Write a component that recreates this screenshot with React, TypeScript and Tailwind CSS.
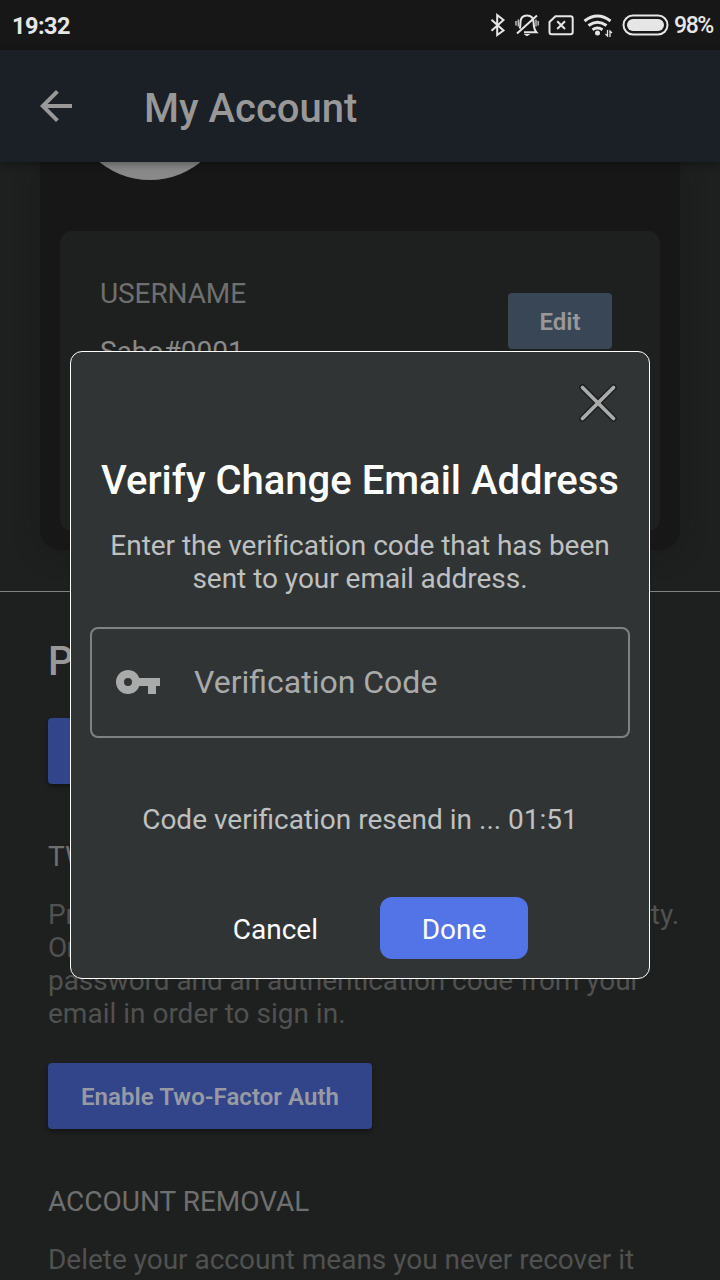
import React from "react";

function StatusIcons() {
  return (
    <svg width="184" height="50" viewBox="486 0 184 50" fill="none" stroke="#e6e6e6" strokeWidth="2">
      <path d="M491.500 19.800 L503.500 30.500 L497.200 35 V15 L503.500 20 L491.500 30.800" />
      <path d="M524 32.300 H536.500 C534 29.500 533.700 27 533.600 22.500 C533.500 17.500 531 15.400 527 15.400 C523 15.400 520.500 17.500 520.400 22.500 C520.400 25 520.300 27 519.800 28.500 M517 33.500 L537 15.500" strokeWidth="2" />
      <path d="M523.500 34 H530.500 L527 36.200 Z" fill="#e6e6e6" stroke="none" />
      <path d="M518.300 19.500 V26.500 M516 21 V25.500 M536 19.500 V26.500 M538.200 21 V25.500" strokeWidth="1.500" opacity="0.8" />
      <path d="M555.500 16.200 H570.500 Q572.700 16.200 572.700 18.400 V32 Q572.700 34.200 570.500 34.200 H551.500 Q549.500 34.200 549.500 32 V22 Z" />
      <path d="M557.200 21.200 L565 29 M565 21.200 L557.200 29" />
      <path d="M584.500 21 Q597.500 11 610.500 21" strokeWidth="3" />
      <path d="M588.500 25.500 Q597.500 19 606.500 25.500" strokeWidth="3" />
      <path d="M592.500 29.700 Q597.500 26.500 602.500 29.700" strokeWidth="3" />
      <circle cx="597.500" cy="33" r="2.500" fill="#e6e6e6" stroke="none" />
      <path d="M607.500 30 V36 L605.500 34 M610 37 V31 L612 33" strokeWidth="1.300" />
      <rect x="623.500" y="15.500" width="44" height="19" rx="9.500" />
      <rect x="627" y="19" width="37" height="12" rx="6" fill="#e6e6e6" stroke="none" />
    </svg>
  );
}

function StatusBar() {
  return (
    <div className="flex h-[50px] shrink-0 items-center bg-[#171717] text-[#e6e6e6]">
      <span className="ml-3 mt-[2px] w-[474px] text-[23.5px] font-bold leading-7 tracking-[-0.5px]">19:32</span>
      <StatusIcons />
      <span className="ml-1 mt-[2px] text-[23px] font-medium leading-7 tracking-[-1.4px]">98%</span>
    </div>
  );
}

function AccountPage() {
  return (
    <main className="flex h-[1118px] flex-col overflow-hidden">
      <section className="mx-10 h-[388px] shrink-0 rounded-b-[20px] bg-[#171717] px-5 shadow-[0_4px_20px_4px_rgba(23,23,23,0.35)]">
        <div className="flex h-[69px] items-start overflow-hidden pl-[10px]">
          <svg className="-mt-[142px] shrink-0" width="160" height="160">
            <circle cx="80" cy="80" r="80" fill="#898989" />
          </svg>
        </div>
        <div className="flex h-[300px] justify-between rounded-xl bg-[#1e201f] pl-10 pr-12">
          <div className="pt-[46px] text-[28px] leading-[33px]">
            <h3 className="tracking-[-0.1px] text-[#6f6f6f]">USERNAME</h3>
            <p className="mt-[25px] text-[#898989]">Sabo#0001</p>
          </div>
          <button className="mt-[62px] h-14 w-[104px] rounded bg-[#384656] pt-[2px] text-[24px] font-semibold text-[#989898]">Edit</button>
        </div>
      </section>
      <div className="mt-[41px] h-px shrink-0 bg-[#808180]" />
      <section className="px-12 text-[28px] leading-[33px]">
        <h2 className="mt-[46px] text-[40px] font-medium leading-[47px] text-[#989898]">Password</h2>
        <button className="mt-[33px] block h-[66px] w-[270px] rounded bg-[#32458b] text-[24px] font-medium text-[#989898] shadow-[0_3px_4px_rgba(0,0,0,0.35)]">Change Password</button>
        <h3 className="mt-[56px] text-[#6f6f6f]">TWO-FACTOR AUTH</h3>
        <p className="mt-[25px] whitespace-nowrap tracking-[-0.05px] text-[#505150]">
          <span className="block w-[631px] text-right">
            <span className="float-left">Protect your account</span>with extra security.
          </span>
          <span className="tracking-[-0.8px]">Once enabled, you will need both your</span>
          <br />
          password and an authentication code from your
          <br />
          <span className="tracking-normal">email in order to sign in.</span>
        </p>
        <button className="mt-[33px] block h-[66px] w-[324px] rounded bg-[#32458b] pt-[2px] text-[24px] font-semibold tracking-[0.04px] text-[#989aa3] shadow-[0_3px_4px_rgba(0,0,0,0.35)]">Enable Two-Factor Auth</button>
        <h3 className="mt-[56px] text-[#6f6f6f]">ACCOUNT REMOVAL</h3>
        <p className="mt-[25px] whitespace-nowrap tracking-[-0.02px] text-[#505150]">Delete your account means you never recover it</p>
      </section>
    </main>
  );
}

function VerifyDialog() {
  return (
    <div role="dialog" className="absolute left-[70px] top-[351px] flex h-[628px] w-[580px] flex-col rounded-xl border border-white bg-[#303435] px-[19px] text-center">
      <button aria-label="Close" className="mr-[10px] mt-[29px] size-[44px] self-end">
        <svg width="44" height="44" viewBox="0 0 44 44" strokeLinecap="round">
          <path d="M6.500 6.500 L37.500 37.500 M37.500 6.500 L6.500 37.500" stroke="#1b1d1d" strokeWidth="6.500" />
          <path d="M6.500 6.500 L37.500 37.500 M37.500 6.500 L6.500 37.500" stroke="#a9abab" strokeWidth="3.800" />
        </svg>
      </button>
      <h1 className="mt-8 whitespace-nowrap text-[40px] font-medium leading-[47px] text-white">Verify Change Email Address</h1>
      <p className="mt-[25px] text-[28px] leading-[33px] tracking-[-0.03px] text-[#bfc0c0]">
        Enter the verification code that has been
        <br />
        sent to your email address.
      </p>
      <div className="mt-8 flex h-[111px] shrink-0 items-center rounded-lg border-2 border-[#7f8182] pl-6 text-[#a9abab]">
        <svg className="-mt-px" width="44" height="24" viewBox="0 0 44 24" fill="currentColor">
          <path fillRule="evenodd" d="M23.300 8 A12 12 0 1 0 23.300 16 H32 V24 H40 V16 H44 V8 Z M12 8 A4 4 0 1 1 12 16 A4 4 0 1 1 12 8 Z" />
        </svg>
        <span className="-mt-px ml-[34px] text-[32px] leading-[38px]">Verification Code</span>
      </div>
      <p className="mt-[65px] text-[28px] leading-[33px] text-[#bfc0c0]">Code verification resend in ... 01:51</p>
      <div className="mt-[61px] flex justify-end pr-[102px] text-[28px] text-white">
        <button className="mr-[62px] h-[62px] pt-[3px]">Cancel</button>
        <button className="h-[62px] w-[148px] rounded-xl bg-[#5274e7] pt-[3px]">Done</button>
      </div>
    </div>
  );
}

export default function App() {
  return (
    <div className="relative h-[1280px] w-[720px] overflow-hidden bg-[#1e201f] font-[Roboto,sans-serif]">
      <StatusBar />
      <header className="relative flex h-28 items-center bg-[#1b1f26] pl-10 shadow-[0_2px_8px_rgba(0,0,0,0.35)]">
        <svg width="32" height="32" viewBox="4 4 16 16" fill="#989898">
          <path d="M20 11H7.830l5.590-5.590L12 4l-8 8 8 8 1.410-1.410L7.830 13H20v-2z" />
        </svg>
        <h1 className="ml-[72px] mt-1 text-[40px] font-medium leading-[47px] text-[#989898]">My Account</h1>
      </header>
      <AccountPage />
      <VerifyDialog />
    </div>
  );
}
